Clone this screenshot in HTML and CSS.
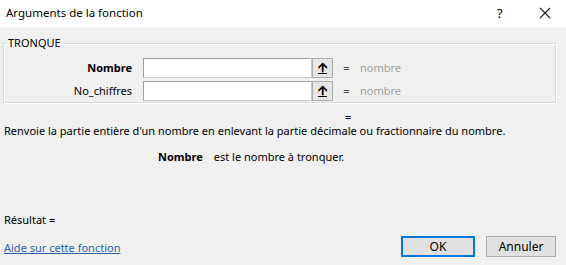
FILE: index.html
```html
<!DOCTYPE html>
<html lang="fr">
<head>
    <meta charset="UTF-8">
    <title>Arguments de la fonction</title>
    <link rel="stylesheet" href="styles.css">
</head>
<body>
    <div class="dialog">
        <div class="titlebar">
            <span class="title">Arguments de la fonction</span>
            <span class="help">?</span>
            <span class="close">
                <svg width="12" height="12" viewBox="0 0 12 12"><path d="M1 1 L11 11 M11 1 L1 11" stroke="#222" stroke-width="1.1" fill="none"/></svg>
            </span>
        </div>
        <div class="content">
            <fieldset class="group">
                <legend>TRONQUE</legend>
                <div class="arg-row">
                    <label class="arg-name bold">Nombre</label>
                    <div class="arg-input"><input type="text"><span class="pick">&#129129;</span></div>
                    <span class="eq">=</span>
                    <span class="arg-value">nombre</span>
                </div>
                <div class="arg-row">
                    <label class="arg-name">No_chiffres</label>
                    <div class="arg-input"><input type="text"><span class="pick">&#129129;</span></div>
                    <span class="eq">=</span>
                    <span class="arg-value">nombre</span>
                </div>
            </fieldset>
            <div class="formula-eq">=</div>
            <div class="desc">Renvoie la partie entière d'un nombre en enlevant la partie décimale ou fractionnaire du nombre.</div>
            <div class="arg-desc"><span class="bold">Nombre</span><span class="arg-text">est le nombre à tronquer.</span></div>
            <div class="result">Résultat =</div>
            <div class="footer">
                <a class="help-link" href="#">Aide sur cette fonction</a>
                <div class="buttons">
                    <button class="btn default">OK</button>
                    <button class="btn">Annuler</button>
                </div>
            </div>
        </div>
    </div>
</body>
</html>
```

FILE: styles.css
```css
body {
    margin: 0;
    font-family: "Segoe UI", "Noto Sans", "Open Sans", sans-serif;
    font-size: 11px;
    color: #000;
    background-color: #f0f0f0;
}
.dialog {
    width: 566px;
    height: 265px;
    overflow: hidden;
}
.titlebar {
    height: 28px;
    background-color: #fff;
    display: flex;
    align-items: center;
    border-bottom: 1px solid #f6f6f6;
    box-sizing: border-box;
    font-size: 11.5px;
}
.title {
    padding-left: 6px;
    padding-bottom: 2px;
    flex: 1;
}
.help {
    width: 14px;
    margin-right: 28px;
    font-size: 13px;
    padding-bottom: 2px;
}
.close {
    width: 12px;
    margin-right: 15px;
    display: flex;
    margin-bottom: 2px;
}
.content {
    padding: 0 10px 0 3px;
}
.group {
    margin: 8px 0 0;
    padding: 6px 2px 2px;
    height: 67px;
    box-sizing: border-box;
    border: 1px solid #dcdcdc;
    box-shadow: inset 1px 1px 0 #fff, 1px 1px 0 #fff;
}
.group legend {
    padding: 0 2px;
    line-height: 14px;
}
.arg-row {
    display: grid;
    grid-template-columns: 127px 190px 7px auto;
    column-gap: 10px;
    align-items: center;
    height: 23px;
}
.arg-name {
    text-align: right;
    padding-right: 1px;
}
.bold {
    font-weight: bold;
}
.arg-input {
    display: flex;
    height: 20px;
}
.arg-input input {
    width: 169px;
    height: 20px;
    box-sizing: border-box;
    border: 1px solid #7a7a7a;
    border-color: #a0a0a0 #c8c8c8 #c8c8c8 #a0a0a0;
    background: #fff;
    margin: 0;
    padding: 0 3px;
}
.pick {
    width: 21px;
    height: 20px;
    box-sizing: border-box;
    border: 1px solid #adadad;
    background-color: #e6e6e6;
    font-size: 13px;
    font-weight: bold;
    line-height: 17px;
    text-align: center;
    text-decoration: underline;
    color: #000;
    font-family: "DejaVu Sans", sans-serif;
}
.eq {
    text-align: center;
    color: #444;
}
.arg-value {
    color: #a0a0a0;
}
.formula-eq {
    margin-top: 8px;
    padding-left: 342px;
    height: 12px;
    line-height: 12px;
}
.desc {
    padding-left: 1px;
    line-height: 16px;
    height: 16px;
}
.arg-desc {
    padding-left: 155px;
    margin-top: 10px;
    line-height: 16px;
    height: 16px;
}
.arg-text {
    margin-left: 11px;
}
.result {
    margin-top: 47px;
    padding-left: 1px;
    line-height: 16px;
}
.footer {
    display: flex;
    justify-content: space-between;
    align-items: flex-end;
    margin-top: 8px;
}
.help-link {
    padding-left: 1px;
    margin-bottom: 1px;
    line-height: 16px;
    color: #2a62a8;
    text-decoration: underline;
}
.buttons {
    display: flex;
    gap: 11px;
}
.btn {
    font-family: inherit;
    font-size: 12px;
    width: 70px;
    height: 21px;
    box-sizing: border-box;
    border: 1px solid #adadad;
    background-color: #e1e1e1;
    color: #000;
    padding: 0;
}
.btn.default {
    width: 74px;
    border: 2px solid #0078d7;
}
```
